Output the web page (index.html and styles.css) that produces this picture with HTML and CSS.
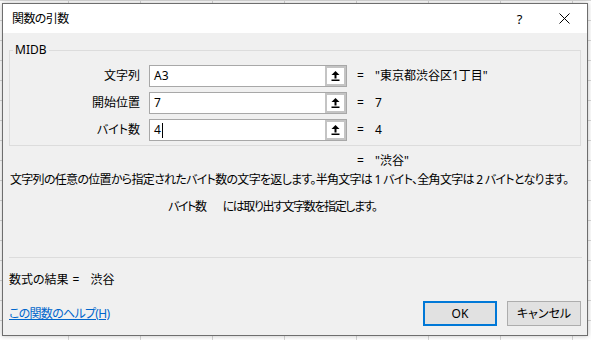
FILE: index.html
```html
<!DOCTYPE html>
<html lang="ja">
<head>
<meta charset="utf-8">
<title>関数の引数</title>
<link rel="stylesheet" href="styles.css">
</head>
<body>
<div class="desktop">
  <div class="dialog">
    <div class="titlebar">
      <span class="title">関数の引数</span>
      <span class="tbtn help">?</span>
      <span class="tbtn close"><svg width="11" height="11" viewBox="0 0 11 11"><path d="M0.5 0.5L10.5 10.5M10.5 0.5L0.5 10.5" stroke="#000" stroke-width="1" fill="none"/></svg></span>
    </div>
    <div class="body">
      <fieldset class="group">
        <legend>MIDB</legend>
        <div class="arg">
          <span class="lbl">文字列</span>
          <span class="field"><span class="txt">A3</span><span class="ref"><svg width="9" height="10" viewBox="0 0 9 10"><path d="M4.5 0L8.5 4H5.5V7.5H3.5V4H0.5Z" fill="#000"/><rect x="0.5" y="8.5" width="8" height="1.5" fill="#000"/></svg></span></span>
          <span class="eq">=</span>
          <span class="val">"東京都渋谷区1丁目"</span>
        </div>
        <div class="arg">
          <span class="lbl">開始位置</span>
          <span class="field"><span class="txt">7</span><span class="ref"><svg width="9" height="10" viewBox="0 0 9 10"><path d="M4.5 0L8.5 4H5.5V7.5H3.5V4H0.5Z" fill="#000"/><rect x="0.5" y="8.5" width="8" height="1.5" fill="#000"/></svg></span></span>
          <span class="eq">=</span>
          <span class="val">7</span>
        </div>
        <div class="arg">
          <span class="lbl">バイト数</span>
          <span class="field"><span class="txt">4<span class="caret"></span></span><span class="ref"><svg width="9" height="10" viewBox="0 0 9 10"><path d="M4.5 0L8.5 4H5.5V7.5H3.5V4H0.5Z" fill="#000"/><rect x="0.5" y="8.5" width="8" height="1.5" fill="#000"/></svg></span></span>
          <span class="eq">=</span>
          <span class="val">4</span>
        </div>
      </fieldset>
      <div class="result-row"><span class="eq">=</span><span class="val">"渋谷"</span></div>
      <p class="desc">文字列の任意の位置から指定されたバイト数の文字を返します。半角文字は 1 バイト、全角文字は 2 バイトとなります。</p>
      <p class="argdesc"><span class="argname">バイト数</span>には取り出す文字数を指定します。</p>
      <div class="sep"></div>
      <div class="formula"><span>数式の結果</span><span class="feq">=</span><span>渋谷</span></div>
      <div class="footer">
        <a class="helplink" href="#">この関数のヘルプ(H)</a>
        <button class="btn ok">OK</button>
        <button class="btn cancel">キャンセル</button>
      </div>
    </div>
  </div>
</div>
</body>
</html>
```
FILE: styles.css
```css
* { box-sizing: border-box; }
html, body { margin: 0; padding: 0; }
body {
  font-family: "Noto Sans", "Noto Sans CJK JP", sans-serif;
  font-size: 12px;
  line-height: 14px;
  color: #000;
  font-feature-settings: "palt";
}
.desktop {
  position: relative;
  width: 591px;
  height: 340px;
  overflow: hidden;
  background-color: #fff;
  background-image:
    linear-gradient(to right, #d6d6d6 1px, transparent 1px),
    linear-gradient(to bottom, #d6d6d6 1px, transparent 1px);
  background-size: 72px 20px;
  background-position: 68px 0;
}
.dialog {
  position: absolute;
  left: 2px;
  top: 3px;
  width: 586px;
  height: 333px;
  border: 1px solid #6e6e6e;
  background: #f0f0f0;
  display: flex;
  flex-direction: column;
  box-shadow: 0 0 5px rgba(0,0,0,0.25);
}
.titlebar {
  height: 29px;
  background: #fff;
  display: flex;
  align-items: center;
}
.title { margin-left: 9px; flex: 1; letter-spacing: -0.6px; }
.tbtn {
  width: 45px;
  height: 29px;
  display: flex;
  align-items: center;
  justify-content: center;
}
.help { font-size: 13px; }
.body {
  flex: 1;
  padding: 0 6px;
}
.group {
  margin: 10px 0 0 0;
  border: 1px solid #dcdcdc;
  padding: 8px 0 4px 0;
  min-width: 0;
}
.group legend {
  margin-left: 3px;
  padding: 0 2px;
  line-height: 14px;
}
.arg {
  display: flex;
  align-items: center;
  height: 22px;
}
.arg + .arg { margin-top: 5px; }
.lbl { width: 130px; text-align: right; }
.field {
  margin-left: 9px;
  width: 198px;
  height: 22px;
  border: 1px solid #a8a8a8;
  background: #fff;
  display: flex;
}
.txt {
  flex: 1;
  padding-left: 4px;
  line-height: 20px;
  display: flex;
  align-items: center;
}
.caret {
  display: inline-block;
  width: 1px;
  height: 15px;
  background: #000;
  margin-left: 1px;
}
.ref {
  width: 21px;
  height: 20px;
  border: 2px solid #c4c4c4;
  background: #fff;
  display: flex;
  align-items: center;
  justify-content: center;
}
.eq { margin-left: 10px; width: 18px; }
.val { white-space: nowrap; }
.result-row {
  display: flex;
  margin-top: 8px;
  padding-left: 338px;
}
.desc { margin: 5px 0 0 1px; white-space: nowrap; letter-spacing: -0.7px; }
.argdesc { margin: 13px 0 0 159px; white-space: nowrap; letter-spacing: -1.4px; }
.argname { margin-right: 17px; }
.sep {
  margin-top: 43px;
  height: 1px;
  background: #dcdcdc;
  margin-right: -1px;
}
.formula { margin-top: 15px; display: flex; }
.feq { margin: 0 11px 0 4px; }
.footer {
  margin-top: 14px;
  display: flex;
  align-items: center;
  height: 25px;
}
.helplink {
  flex: 1;
  color: #0066cc;
  text-decoration: underline;
  letter-spacing: -0.7px;
}
.btn {
  font: inherit;
  font-feature-settings: "palt";
  width: 74px;
  height: 25px;
  background: #e1e1e1;
  color: #000;
  padding: 0;
}
.ok { border: 2px solid #0078d7; }
.cancel { border: 1px solid #adadad; margin-left: 10px; }
```
